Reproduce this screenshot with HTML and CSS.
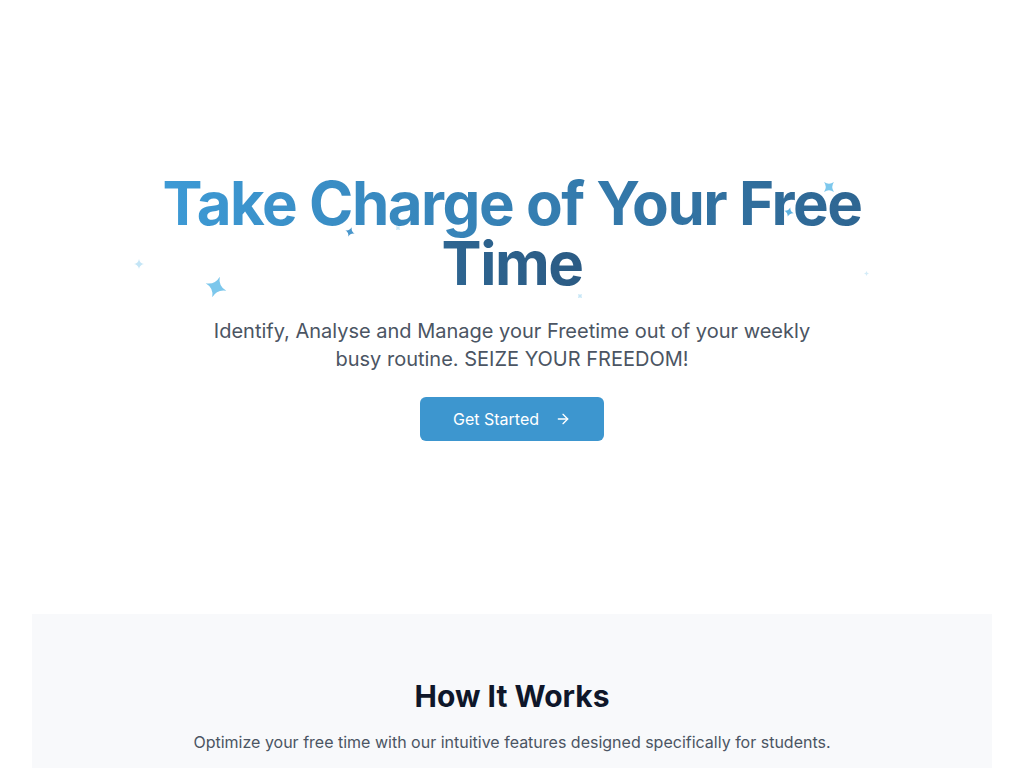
FILE: index.html
```html
<!DOCTYPE html>
<html lang="en">
<head>
<meta charset="utf-8">
<title>Take Charge of Your Free Time</title>
<link rel="stylesheet" href="styles.css">
</head>
<body>
<main class="page">
  <section class="hero">
    <div class="sparkles" aria-hidden="true">
      <svg class="spark s1" viewBox="0 0 24 24"><path d="M12 0Q13.8 10.2 24 12Q13.8 13.8 12 24Q10.2 13.8 0 12Q10.2 10.2 12 0Z"/></svg>
      <svg class="spark s2" viewBox="0 0 24 24"><path d="M12 0Q13.8 10.2 24 12Q13.8 13.8 12 24Q10.2 13.8 0 12Q10.2 10.2 12 0Z"/></svg>
      <svg class="spark s3" viewBox="0 0 24 24"><path d="M12 0Q13.8 10.2 24 12Q13.8 13.8 12 24Q10.2 13.8 0 12Q10.2 10.2 12 0Z"/></svg>
      <svg class="spark s4" viewBox="0 0 24 24"><path d="M12 0Q13.8 10.2 24 12Q13.8 13.8 12 24Q10.2 13.8 0 12Q10.2 10.2 12 0Z"/></svg>
      <svg class="spark s5" viewBox="0 0 24 24"><path d="M12 0Q13.8 10.2 24 12Q13.8 13.8 12 24Q10.2 13.8 0 12Q10.2 10.2 12 0Z"/></svg>
      <svg class="spark s6" viewBox="0 0 24 24"><path d="M12 0Q13.8 10.2 24 12Q13.8 13.8 12 24Q10.2 13.8 0 12Q10.2 10.2 12 0Z"/></svg>
      <svg class="spark s7" viewBox="0 0 24 24"><path d="M12 0Q13.8 10.2 24 12Q13.8 13.8 12 24Q10.2 13.8 0 12Q10.2 10.2 12 0Z"/></svg>
      <svg class="spark s8" viewBox="0 0 24 24"><path d="M12 0Q13.8 10.2 24 12Q13.8 13.8 12 24Q10.2 13.8 0 12Q10.2 10.2 12 0Z"/></svg>
    </div>
    <div class="hero-inner">
      <h1 class="hero-title"><span class="gradient-text">Take Charge of Your Free Time</span></h1>
      <p class="hero-text">Identify, Analyse and Manage your Freetime out of your weekly busy routine. SEIZE YOUR FREEDOM!</p>
      <a class="btn-primary" href="#">
        <span>Get Started</span>
        <svg class="btn-icon" viewBox="0 0 24 24" fill="none" stroke="currentColor" stroke-width="2" stroke-linecap="round" stroke-linejoin="round"><path d="M5 12h14"/><path d="M12 5l7 7-7 7"/></svg>
      </a>
    </div>
  </section>

  <section class="how">
    <h2 class="how-title">How It Works</h2>
    <p class="how-text">Optimize your free time with our intuitive features designed specifically for students.</p>
  </section>
</main>
</body>
</html>
```

FILE: styles.css
```css
* {
  box-sizing: border-box;
}

html, body {
  margin: 0;
  padding: 0;
  background: #ffffff;
}

body {
  font-family: Inter, "Noto Sans", "Liberation Sans", sans-serif;
  color: #111827;
}

.page {
  padding: 0 32px;
}

.hero {
  position: relative;
  padding: 173px 0 173px;
}

.hero-inner {
  display: flex;
  flex-direction: column;
  align-items: center;
  text-align: center;
}

.hero-title {
  margin: 0 0 24px;
  max-width: 768px;
  font-size: 60px;
  line-height: 60px;
  font-weight: 700;
  letter-spacing: -0.025em;
}

.gradient-text {
  background-image: linear-gradient(to right, #3d9ad5, #2b5b84);
  -webkit-background-clip: text;
  background-clip: text;
  color: transparent;
}

.hero-text {
  margin: 0 0 24px;
  max-width: 610px;
  font-size: 20px;
  line-height: 28px;
  color: #4b5563;
}

.btn-primary {
  display: inline-flex;
  align-items: center;
  gap: 16px;
  height: 44px;
  padding: 0 33px;
  border-radius: 6px;
  background: #3d96cf;
  color: #ffffff;
  font-size: 16px;
  line-height: 24px;
  font-weight: 400;
  text-decoration: none;
}

.btn-icon {
  width: 16px;
  height: 16px;
}

.sparkles {
  position: absolute;
  inset: 0;
  pointer-events: none;
}

.spark {
  position: absolute;
  fill: #7cc7ec;
}

.s1 { left: 790px; top: 180px; width: 14px; height: 14px; transform: rotate(45deg); }
.s2 { left: 752px; top: 207px; width: 10px; height: 10px; fill: #5fb2e0; transform: rotate(15deg); }
.s3 { left: 313px; top: 227px; width: 10px; height: 10px; fill: #4a97cc; transform: rotate(20deg); }
.s4 { left: 363px; top: 225px; width: 6px; height: 6px; fill: #c6e6f6; transform: rotate(45deg); }
.s5 { left: 102px; top: 259px; width: 10px; height: 10px; fill: #c4e5f6; }
.s6 { left: 173px; top: 276px; width: 22px; height: 22px; transform: rotate(20deg); }
.s7 { left: 545px; top: 293px; width: 6px; height: 6px; fill: #c6e6f6; transform: rotate(45deg); }
.s8 { left: 832px; top: 271px; width: 5px; height: 5px; fill: #d4ecf8; }

.how {
  background: #f8f9fb;
  padding: 64px 32px;
  text-align: center;
}

.how-title {
  margin: 0 0 16px;
  font-size: 30px;
  line-height: 36px;
  font-weight: 700;
  color: #0f172a;
}

.how-text {
  margin: 0;
  font-size: 16px;
  line-height: 24px;
  color: #4b5563;
}
```
